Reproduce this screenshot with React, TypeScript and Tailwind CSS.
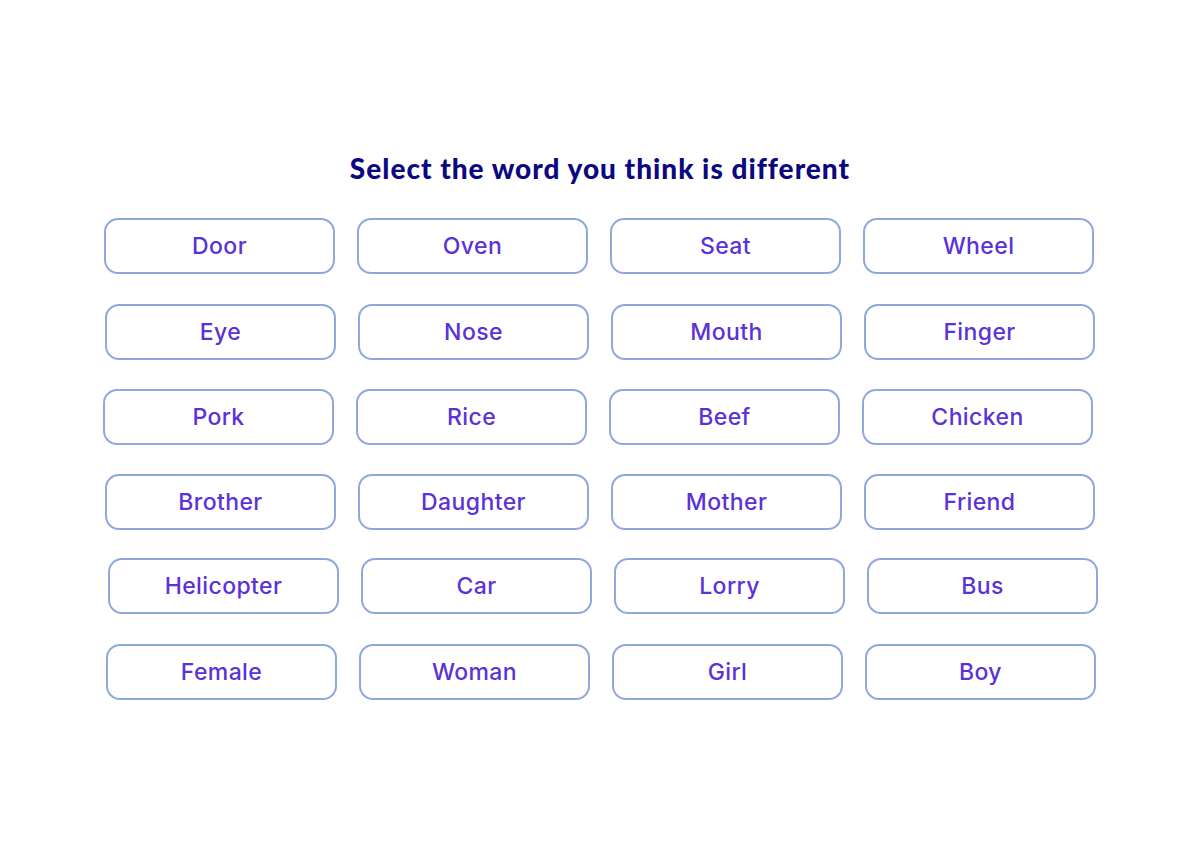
const ROWS: { words: string[]; shift: string; top: string }[] = [
  { words: ['Door', 'Oven', 'Seat', 'Wheel'], shift: 'ml-[-1px]', top: 'mt-0' },
  { words: ['Eye', 'Nose', 'Mouth', 'Finger'], shift: 'ml-0', top: 'mt-[30px]' },
  { words: ['Pork', 'Rice', 'Beef', 'Chicken'], shift: 'ml-[-2px]', top: 'mt-[29px]' },
  { words: ['Brother', 'Daughter', 'Mother', 'Friend'], shift: 'ml-0', top: 'mt-[29px]' },
  { words: ['Helicopter', 'Car', 'Lorry', 'Bus'], shift: 'ml-[3px]', top: 'mt-[28px]' },
  { words: ['Female', 'Woman', 'Girl', 'Boy'], shift: 'ml-[1px]', top: 'mt-[30px]' },
];

export default function App() {
  return (
    <div className="w-[1200px] h-[845px] bg-white flex flex-col items-center pt-[150px]">
      <h1 className="text-[28px] leading-[36px] font-black text-[#0b0880] tracking-[1px] font-['Lato',sans-serif]">
        Select the word you think is different
      </h1>

      <div className="mt-[32px] w-[990px] flex flex-col">
        {ROWS.map((row) => (
          <div key={row.words[0]} className={`flex gap-[22px] ${row.shift} ${row.top}`}>
            {row.words.map((w) => (
              <button
                key={w}
                className="w-[231px] h-[56px] shrink-0 rounded-[14px] border-2 border-[#8ea8de] bg-white flex items-center justify-center text-[23px] tracking-[0.4px] font-medium text-[#5a32d8] font-['Inter',sans-serif]"
              >
                {w}
              </button>
            ))}
          </div>
        ))}
      </div>
    </div>
  );
}
